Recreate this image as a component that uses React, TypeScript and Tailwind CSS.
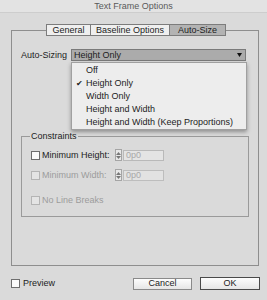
import React from "react";

function Check({ enabled }: { enabled: boolean }) {
  return (
    <div
      className={
        "w-[9px] h-[9px] shrink-0 border " +
        (enabled ? "border-[#6e6e6e] bg-[#fbfbfb]" : "border-[#b4b4b4] bg-[#e4e4e4]")
      }
    />
  );
}

function Stepper() {
  return (
    <div className="w-[7px] h-[12px] border border-[#a5a5a5] bg-[#e8e8e8] flex flex-col items-center justify-center gap-[1px]">
      <svg width="5" height="3" viewBox="0 0 5 3">
        <path d="M2.5 0 L5 3 L0 3 Z" fill="#777" />
      </svg>
      <svg width="5" height="3" viewBox="0 0 5 3">
        <path d="M0 0 L5 0 L2.5 3 Z" fill="#777" />
      </svg>
    </div>
  );
}

export default function App() {
  const items = ["Off", "Height Only", "Width Only", "Height and Width", "Height and Width (Keep Proportions)"];
  return (
    <div className="w-[267px] h-[300px] bg-[#dadada] font-['Liberation_Sans',Arial,sans-serif] text-[9px] text-[#1c1c1c] flex flex-col overflow-hidden">
      <div className="h-[13px] shrink-0 bg-[#e3e3e3] border-b border-[#cdcdcd] text-center text-[#5a5a5a] leading-[12px]">
        Text Frame Options
      </div>
      <div className="flex flex-col pl-[11px] pr-[8px] pt-[11px]">
        <div className="relative z-10 flex justify-center h-[12px] pl-[2px]">
          <div className="w-[45px] h-[12px] border border-[#7c7c7c] bg-[#efefef] flex items-center justify-center leading-none">
            General
          </div>
          <div className="w-[79px] h-[12px] border-y border-r border-[#7c7c7c] bg-[#efefef] flex items-center justify-center leading-none">
            Baseline Options
          </div>
          <div className="w-[56px] h-[12px] border-y border-r border-[#7c7c7c] bg-[#b3b3b3] flex items-center justify-center leading-none">
            Auto-Size
          </div>
        </div>
        <div className="relative -mt-[6px] h-[236px] border border-[#8e8e8e] flex flex-col pt-[18px]">
          <div className="flex items-center h-[12px] pl-[9px] pr-[12px]">
            <div className="w-[50px] leading-none">Auto-Sizing</div>
            <div className="flex-1 h-[12px] border border-[#7a7a7a] bg-[#ababab] flex items-center pl-[2px] pr-[3px] leading-none">
              <span className="flex-1">Height Only</span>
              <svg width="5" height="4" viewBox="0 0 5 4">
                <path d="M0 0 L5 0 L2.5 4 Z" fill="#111" />
              </svg>
            </div>
          </div>

          <div className="mt-[75px] mx-[9px] h-[81px] border border-[#9a9a9a] relative flex flex-col pt-[12px] pl-[9px]">
            <div className="absolute -top-[6px] left-[8px] px-[1px] bg-[#dadada] leading-[11px]">Constraints</div>
            <div className="flex items-center h-[12px]">
              <Check enabled />
              <div className="w-[75px] pl-[2px] leading-none">Minimum Height:</div>
              <Stepper />
              <div className="ml-[1px] w-[41px] h-[11px] border border-[#b9b9b9] bg-[#e4e4e4] text-[#a8a8a8] pl-[2px] flex items-center leading-none">
                0p0
              </div>
            </div>
            <div className="flex items-center h-[12px] mt-[8px] text-[#9c9c9c]">
              <Check enabled={false} />
              <div className="w-[75px] pl-[2px] leading-none">Minimum Width:</div>
              <Stepper />
              <div className="ml-[1px] w-[41px] h-[11px] border border-[#bdbdbd] bg-[#e2e2e2] text-[#a8a8a8] pl-[2px] flex items-center leading-none">
                0p0
              </div>
            </div>
            <div className="flex items-center h-[12px] mt-[13px] text-[#9c9c9c]">
              <Check enabled={false} />
              <div className="pl-[2px] leading-none">No Line Breaks</div>
            </div>
          </div>

          <div className="absolute top-[31px] left-[59px] w-[176px] h-[68px] bg-[#ededed] border border-[#a0a0a0] shadow-[0_2px_4px_rgba(0,0,0,0.35)] flex flex-col pt-[1px]">
            {items.map((it) => (
              <div key={it} className="h-[13.5px] flex items-center leading-none">
                <div className="w-[14px] flex justify-end pr-[3px] text-[8px]">{it === "Height Only" ? "✔" : ""}</div>
                <span>{it}</span>
              </div>
            ))}
          </div>
        </div>
      </div>
      <div className="mt-[11px] h-[13px] flex items-center pl-[11px] pr-[7px]">
        <Check enabled />
        <span className="ml-[3px] leading-none">Preview</span>
        <div className="flex-1" />
        <div className="w-[59px] h-[12px] border border-[#8a8a8a] bg-gradient-to-b from-[#fdfdfd] to-[#e6e6e6] flex items-center justify-center leading-none">
          Cancel
        </div>
        <div className="ml-[8px] w-[60px] h-[13px] border border-[#4a4a4a] bg-gradient-to-b from-[#fdfdfd] to-[#e6e6e6] flex items-center justify-center leading-none">
          OK
        </div>
      </div>
    </div>
  );
}
